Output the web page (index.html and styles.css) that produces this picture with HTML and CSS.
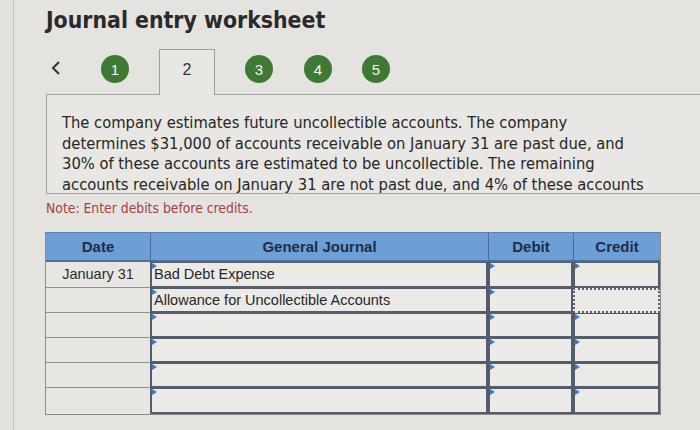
FILE: index.html
```html
<!DOCTYPE html>
<html>
<head>
<meta charset="utf-8">
<link rel="stylesheet" href="styles.css">
</head>
<body>
<div class="page">
  <h1 class="title">Journal entry worksheet</h1>
  <div class="nav">
    <span class="chev">
      <svg width="10" height="16" viewBox="0 0 10 16"><path d="M8 2 L2 8 L8 14" fill="none" stroke="#333" stroke-width="2"/></svg>
    </span>
    <span class="step s1">1</span>
    <span class="tab">2</span>
    <span class="step s3">3</span>
    <span class="step s4">4</span>
    <span class="step s5">5</span>
  </div>
  <div class="box">
    <p class="para">The company estimates future uncollectible accounts. The company<br>determines $31,000 of accounts receivable on January 31 are past due, and<br>30% of these accounts are estimated to be uncollectible. The remaining<br>accounts receivable on January 31 are not past due, and 4% of these accounts</p>
  </div>
  <p class="note">Note: Enter debits before credits.</p>
  <div class="grid">
    <div class="hd">Date</div>
    <div class="hd">General Journal</div>
    <div class="hd">Debit</div>
    <div class="hd">Credit</div>

    <div class="date">January 31</div>
    <div class="inp acct">Bad Debt Expense</div>
    <div class="inp"></div>
    <div class="inp"></div>

    <div class="date"></div>
    <div class="inp acct">Allowance for Uncollectible Accounts</div>
    <div class="inp"></div>
    <div class="inp focus"></div>

    <div class="date"></div>
    <div class="inp acct"></div>
    <div class="inp"></div>
    <div class="inp"></div>

    <div class="date"></div>
    <div class="inp acct"></div>
    <div class="inp"></div>
    <div class="inp"></div>

    <div class="date"></div>
    <div class="inp acct"></div>
    <div class="inp"></div>
    <div class="inp"></div>

    <div class="date"></div>
    <div class="inp acct"></div>
    <div class="inp"></div>
    <div class="inp"></div>
  </div>
</div>
</body>
</html>
```

FILE: styles.css
```css
html, body {
  margin: 0;
  padding: 0;
  background: #e2e1dc;
  overflow: hidden;
  width: 700px;
  height: 430px;
}
.page {
  margin-left: 13px;
  border-left: 1px solid #c4c4c0;
  padding-left: 32px;
  height: 430px;
  box-sizing: border-box;
  background: #e4e3df;
  overflow: hidden;
}
.title {
  margin: 0;
  padding-top: 6px;
  font-family: "DejaVu Sans Condensed", "DejaVu Sans", sans-serif;
  font-weight: bold;
  font-size: 22.8px;
  line-height: 29px;
  color: #2a2a2a;
}
.nav {
  display: flex;
  align-items: flex-end;
  height: 46px;
  margin-top: 14px;
  position: relative;
  z-index: 2;
}
.chev {
  display: flex;
  align-items: center;
  height: 46px;
  margin-left: 5px;
  padding-bottom: 8px;
  box-sizing: border-box;
}
.step {
  display: flex;
  align-items: center;
  justify-content: center;
  width: 28px;
  height: 28px;
  border-radius: 50%;
  background: #3f7a34;
  color: #f4f4f0;
  font-family: "Liberation Sans", sans-serif;
  font-size: 15px;
  margin-bottom: 12px;
}
.s1 { margin-left: 40px; }
.tab {
  display: flex;
  align-items: center;
  justify-content: center;
  width: 56px;
  height: 46px;
  margin-left: 30px;
  box-sizing: border-box;
  border: 1px solid #9e9e9a;
  border-bottom: none;
  background: #e8e7e3;
  font-family: "Liberation Sans", sans-serif;
  font-size: 16px;
  color: #333;
  padding-bottom: 6px;
}
.s3 { margin-left: 30px; }
.s4 { margin-left: 31px; }
.s5 { margin-left: 30px; }
.box {
  margin-top: -1px;
  border: 1px solid #a3a3a0;
  border-right: none;
  width: 700px;
  background: #e8e7e3;
  padding: 18px 0 0 15px;
  box-sizing: border-box;
}
.para {
  margin: 0 0 -3px 0;
  white-space: nowrap;
  font-family: "DejaVu Sans Condensed", "DejaVu Sans", sans-serif;
  font-size: 16.4px;
  line-height: 20.7px;
  color: #262626;
}
.note {
  margin: 6px 0 0 0;
  font-family: "DejaVu Sans Condensed", "DejaVu Sans", sans-serif;
  font-size: 13.8px;
  line-height: 17px;
  color: #a8403f;
}
.grid {
  margin-top: 15px;
  margin-left: -1px;
  display: grid;
  grid-template-columns: 104px 338px 85px 87px;
  grid-template-rows: 29px 26px 25px 25px 25px 25px 26px;
  width: 614px;
  border: 1px solid #8c8c8a;
  border-top: 1px solid #5e7fa8;
  box-sizing: content-box;
}
.hd {
  background: #6c9fd6;
  color: #1f2d48;
  font-family: "Liberation Sans", sans-serif;
  font-weight: bold;
  font-size: 15px;
  display: flex;
  align-items: center;
  justify-content: center;
  border-left: 1px solid #4e6e98;
  border-bottom: 2px solid #4e6e98;
}
.hd:first-child { border-left: none; }
.date {
  font-family: "Liberation Sans", sans-serif;
  font-size: 14.5px;
  color: #2c2c2c;
  display: flex;
  align-items: center;
  justify-content: center;
  border-bottom: 1px solid #8e8e8c;
  background: #e7e6e2;
}
.grid > .date:nth-last-child(4) { border-bottom: none; }
.inp {
  position: relative;
  border: 2px solid #535d6b;
  border-top-width: 1px;
  background: #ebeae6;
  font-family: "Liberation Sans", sans-serif;
  font-size: 14.5px;
  color: #262626;
  display: flex;
  align-items: center;
  padding-left: 2px;
  box-sizing: border-box;
}
.inp::before {
  content: "";
  position: absolute;
  left: 0;
  top: 0;
  border-left: 5px solid #3f7bc4;
  border-top: 3px solid transparent;
  border-bottom: 3px solid transparent;
}
.focus {
  border: 2px dotted #5a6270;
}
.focus::before { display: none; }
```
